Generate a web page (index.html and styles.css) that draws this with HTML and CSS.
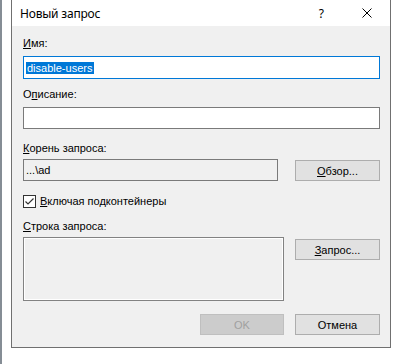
FILE: index.html
```html
<!DOCTYPE html>
<html lang="ru">
<head>
<meta charset="utf-8">
<title>Новый запрос</title>
<link rel="stylesheet" href="styles.css">
</head>
<body>
<div class="screen">
  <div class="edge"></div>
  <div class="gap"></div>
  <div class="dialog">
    <div class="titlebar">
      <span class="title">Новый запрос</span>
      <span class="help">?</span>
      <svg class="close" width="10" height="10" viewBox="0 0 10 10"><path d="M0.5 0.5 L9.5 9.5 M9.5 0.5 L0.5 9.5" stroke="#000" stroke-width="1" fill="none"/></svg>
    </div>
    <div class="content">
      <div class="label l1"><u>И</u>мя:</div>
      <div class="input focused"><span class="sel">disable-users</span></div>
      <div class="label l2">О<u>п</u>исание:</div>
      <div class="input plain"></div>
      <div class="label l3"><u>К</u>орень запроса:</div>
      <div class="row r3">
        <div class="input readonly">...\ad</div>
        <div class="btn b-browse"><u>О</u>бзор...</div>
      </div>
      <div class="check">
        <svg class="box" width="13" height="13" viewBox="0 0 13 13"><rect x="0.5" y="0.5" width="12" height="12" fill="#fff" stroke="#333"/><path d="M2.5 6.5 L5 9 L10.5 3.5" stroke="#333" stroke-width="1.2" fill="none"/></svg>
        <span class="label"><u>В</u>ключая подконтейнеры</span>
      </div>
      <div class="label l4"><u>С</u>трока запроса:</div>
      <div class="row r4">
        <div class="area"></div>
        <div class="btn b-query"><u>З</u>апрос...</div>
      </div>
      <div class="row buttons">
        <div class="btn disabled">OK</div>
        <div class="btn">Отмена</div>
      </div>
    </div>
  </div>
</div>
</body>
</html>
```
FILE: styles.css
```css
html, body {
  margin: 0;
  padding: 0;
  background: #fff;
}
.screen {
  display: flex;
  width: 403px;
  height: 364px;
  align-items: flex-start;
}
.edge {
  width: 2px;
  height: 364px;
  background: #858d95;
}
.gap {
  width: 9px;
}
.dialog {
  width: 378px;
  border: 1px solid #707070;
  border-top: none;
  display: flex;
  flex-direction: column;
}
.titlebar {
  height: 26px;
  background: #fff;
  display: flex;
  align-items: center;
  font-family: "Noto Sans", "Open Sans", sans-serif;
  font-size: 12px;
  color: #000;
}
.title {
  margin-left: 8px;
  letter-spacing: -0.2px;
}
.help {
  margin-left: auto;
  font-size: 12px;
  margin-right: 38px;
}
.close {
  margin-right: 18px;
}
.content {
  background: #f0f0f0;
  height: 321px;
  padding: 0 10px 0 11px;
  display: flex;
  flex-direction: column;
  font-family: "Liberation Sans", Arial, sans-serif;
  font-size: 11px;
  color: #000;
}
.label {
  line-height: 13px;
  height: 13px;
}
u {
  text-decoration: underline;
  text-underline-offset: 1px;
}
.l1 { margin-top: 11px; }
.l2 { margin-top: 9px; }
.l3 { margin-top: 13px; }
.l4 { margin-top: 12px; }
.input {
  box-sizing: border-box;
  height: 22px;
  border: 1px solid #7a7a7a;
  background: #fff;
  margin-top: 6px;
  display: flex;
  align-items: center;
  padding-left: 2px;
}
.input.focused {
  height: 23px;
  border-color: #0078d7;
}
.sel {
  background: #0078d7;
  color: #fff;
  line-height: 12px;
  padding: 0 2px 0 1px;
}
.input.readonly {
  background: #f0f0f0;
  width: 255px;
  margin-top: 0;
}
.row {
  display: flex;
  align-items: flex-start;
}
.r3 {
  margin-top: 4px;
  justify-content: space-between;
}
.btn {
  box-sizing: border-box;
  width: 85px;
  height: 21px;
  background: #e1e1e1;
  border: 1px solid #adadad;
  display: flex;
  align-items: center;
  justify-content: center;
}
.b-browse {
  margin-top: 1px;
}
.check {
  margin-top: 13px;
  height: 14px;
  display: flex;
  align-items: center;
  gap: 4px;
}
.r4 {
  margin-top: 4px;
  justify-content: space-between;
}
.area {
  box-sizing: border-box;
  width: 261px;
  height: 64px;
  border: 1px solid #828282;
  box-shadow: inset 1px 1px 0 #fff, inset -1px -1px 0 #fff;
  background: #f0f0f0;
}
.b-query {
  margin-top: 2px;
}
.buttons {
  margin-top: 13px;
  justify-content: flex-end;
  gap: 11px;
}
.btn.disabled {
  width: 84px;
  background: #cccccc;
  border-color: #bfbfbf;
  color: #a0a0a0;
}
```
